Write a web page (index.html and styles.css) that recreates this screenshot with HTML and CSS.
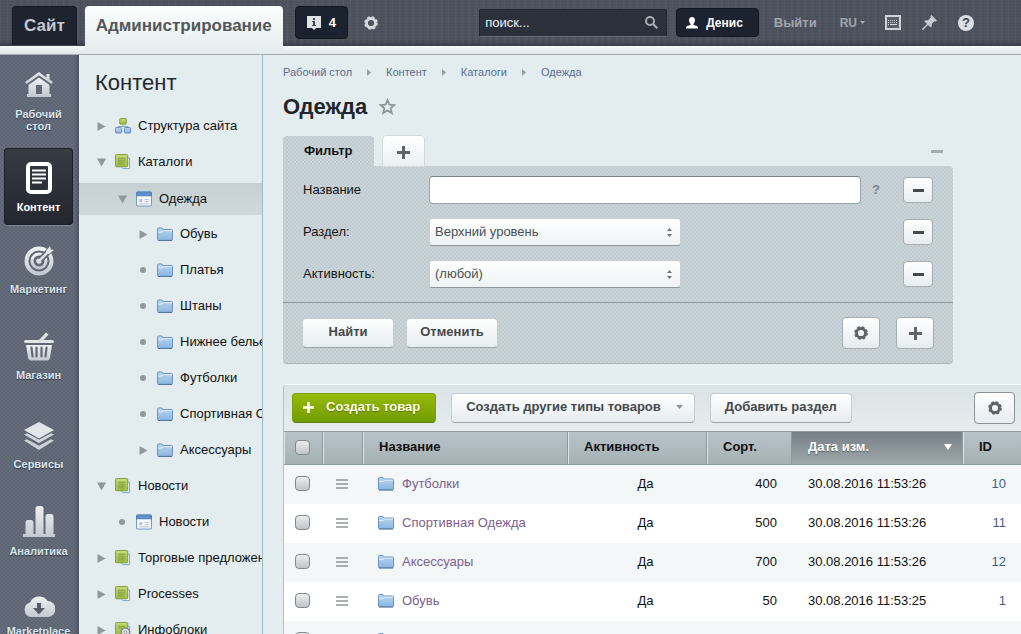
FILE: index.html
```html
<!DOCTYPE html>
<html lang="ru">
<head>
<meta charset="utf-8">
<title>Одежда</title>
<link rel="stylesheet" href="styles.css">
</head>
<body>
<svg class="sprite" aria-hidden="true">
  <defs>
    <linearGradient id="g-folder" x1="0" y1="0" x2="0" y2="1"><stop offset="0" stop-color="#b9d8f3"/><stop offset="1" stop-color="#8cb4de"/></linearGradient>
    <linearGradient id="g-green" x1="0" y1="0" x2="0" y2="1"><stop offset="0" stop-color="#c5da76"/><stop offset="1" stop-color="#9dbb45"/></linearGradient>
    <linearGradient id="g-nav" x1="0" y1="0" x2="0" y2="1"><stop offset="0" stop-color="#eef1f3"/><stop offset="1" stop-color="#c3c9d0"/></linearGradient>
  </defs>
  <symbol id="folder" viewBox="0 0 16 15">
    <path d="M.5 13V2.500q0-1 1-1h3.500l1.200 1.500h8.300q1 0 1 1v9q0 .8-1 .8h-13q-1 0-1-.8z" fill="url(#g-folder)" stroke="#6c93bd"/>
    <path d="M1 5.500h4l1.500-1.300h8.500" fill="none" stroke="#e1effa"/>
    <path d="M1 14h14" stroke="#56779f"/>
  </symbol>
  <symbol id="catalog" viewBox="0 0 17 17">
    <path d="M6.500 4.500h9v11h-7l-2-2z" fill="#e9f1f8" stroke="#7ea0c4"/>
    <path d="M.5 1.500q0-1 1-1h11q1 0 1 1v11q0 1-1 1h-11q-1 0-1-1z" fill="url(#g-green)" stroke="#7f9a3a"/>
    <path d="M3 4.500h8M3 6.500h8M3 8.500h8M3 10.500h6" stroke="#7f9a3a"/>
  </symbol>
  <symbol id="structure" viewBox="0 0 17 17">
    <path d="M8.500 6.500v3M3.500 11v-2h10v2" fill="none" stroke="#8da2b5"/>
    <rect x="5" y=".5" width="7" height="6" rx="1" fill="url(#g-green)" stroke="#7f9a3a"/>
    <rect x=".5" y="10" width="6.500" height="6" rx="1" fill="url(#g-folder)" stroke="#5f86c0"/>
    <rect x="10" y="10" width="6.500" height="6" rx="1" fill="url(#g-folder)" stroke="#5f86c0"/>
  </symbol>
  <symbol id="block" viewBox="0 0 15 14">
    <rect x=".5" y=".5" width="14" height="13" rx="1" fill="#f4f8fc" stroke="#7f9cc0"/>
    <path d="M.5 4V1.500q0-1 1-1h12q1 0 1 1V4z" fill="#5e90cf" stroke="#5480b8"/>
    <path d="M3.500 7.500h2v2h-2zM8 7.500h4M8 9.500h4M3 11.500h9" fill="#b9c2cf" stroke="#b9c2cf" stroke-width=".9"/>
  </symbol>
  <symbol id="blockset" viewBox="0 0 17 17">
    <path d="M6.500 4.500h9v11h-7l-2-2z" fill="#e9f1f8" stroke="#7ea0c4"/>
    <path d="M.5 1.500q0-1 1-1h11q1 0 1 1v11q0 1-1 1h-11q-1 0-1-1z" fill="url(#g-green)" stroke="#7f9a3a"/>
    <path d="M3 4.500h8M3 6.500h5" stroke="#7f9a3a"/>
    <circle cx="11" cy="11" r="4.500" fill="#e3e6e8" stroke="#80868c" stroke-width="1.500"/><circle cx="11" cy="11" r="1.500" fill="#fff" stroke="#80868c"/>
  </symbol>
  <symbol id="gear" viewBox="0 0 14 14">
    <circle cx="7" cy="7" r="4.500" fill="none" stroke="currentColor" stroke-width="2.800"/>
    <circle cx="7" cy="7" r="6.100" fill="none" stroke="currentColor" stroke-width="1.500" stroke-dasharray="2.800 1.990"/>
  </symbol>
  <symbol id="plus" viewBox="0 0 13 13"><path d="M6.500 0v13M0 6.500h13" stroke="currentColor" stroke-width="3"/></symbol>
  <symbol id="minus" viewBox="0 0 11 3"><path d="M0 1.500h11" stroke="currentColor" stroke-width="3"/></symbol>
  <symbol id="right" viewBox="0 0 8 9"><path d="M0 0l8 4.500L0 9z" fill="currentColor"/></symbol>
  <symbol id="down" viewBox="0 0 9 8"><path d="M0 0h9L4.500 8z" fill="currentColor"/></symbol>
  <symbol id="dot" viewBox="0 0 6 6"><circle cx="3" cy="3" r="3" fill="currentColor"/></symbol>
  <symbol id="updown" viewBox="0 0 5 9"><path d="M0 3L2.500 0 5 3zM0 6h5L2.500 9z" fill="currentColor"/></symbol>
  <symbol id="bars" viewBox="0 0 12 10"><path d="M0 1h12M0 5h12M0 9h12" stroke="currentColor" stroke-width="1.600"/></symbol>
</svg>

<header class="top">
  <a class="top-tab" href="#">Сайт</a>
  <a class="top-tab top-tab-on" href="#">Администрирование</a>
  <button class="dark-btn notices" type="button">
    <svg width="14" height="14" viewBox="0 0 14 14"><path d="M0 0h14v12H9l-2 2-2-2H0z" fill="#dfe3e6"/><path d="M6 2h2v2H6zM5 5h3v4h1v1H5V9h1V6H5z" fill="#3d4552"/></svg>
    4
  </button>
  <button class="plain-btn" type="button" aria-label="Настройки"><svg width="14" height="14"><use href="#gear"/></svg></button>
  <form class="search">
    <input type="text" value="поиск..." aria-label="Поиск">
    <button class="plain-btn" type="submit" aria-label="Найти"><svg width="13" height="13" viewBox="0 0 13 13"><circle cx="5" cy="5" r="4" fill="none" stroke="#a7adb3" stroke-width="2"/><path d="M8 8l4.300 4.300" stroke="#a7adb3" stroke-width="2.200"/></svg></button>
  </form>
  <button class="dark-btn user" type="button">
    <svg width="12" height="12" viewBox="0 0 12 12"><path d="M6 0c2 0 3 1.300 3 3.200C9 5 8 6 7.500 7v1l3.500 1q1 .5 1 2.500H0Q0 9.500 1 9l3.500-1V7C4 6 3 5 3 3.200 3 1.300 4 0 6 0z" fill="#fff"/></svg>
    Денис
  </button>
  <a class="top-link" href="#">Выйти</a>
  <button class="top-link lang" type="button">RU<svg width="5" height="3" viewBox="0 0 5 3"><path d="M0 0h5L2.500 3z" fill="#a9adb3"/></svg></button>
  <div class="top-icons">
    <button class="plain-btn" type="button" aria-label="Клавиатура"><svg width="16" height="15" viewBox="0 0 16 15"><rect x="1" y="1" width="14" height="13" fill="#596069" stroke="#ced3d7" stroke-width="2"/><path d="M3 5.500h10M3 7.500h10M3 9.500h10" stroke="#ced3d7" stroke-dasharray="1 1"/><path d="M5 9.500h6" stroke="#ced3d7"/></svg></button>
    <button class="plain-btn" type="button" aria-label="Закрепить"><svg width="15" height="15" viewBox="0 0 15 15"><path d="M9.500 0L15 5.500l-1.300 1-1.200-.3-2.800 2.800c.5 1.500 0 2.500-1 3.500L6 10 1 15l-1 0 0-1 5-5-2.700-2.700c1-1 2-1.300 3.500-.9L8.700 2.500 8.500 1z" fill="#c6cacf"/></svg></button>
    <a class="help" href="#" aria-label="Справка">?</a>
  </div>
</header>

<div class="body">
  <nav class="side">
    <a class="side-item" href="#">
      <svg width="30" height="34" viewBox="0 0 30 34"><path d="M15 4L1 14l1.600 2L15 7.300 27.400 16 29 14l-3.500-2.500V6h-3v3.400z" fill="url(#g-nav)"/><path d="M15 9.500L4.500 17v9H3v3h24v-3h-1.500v-9zM12 17h6v9h-6z" fill="url(#g-nav)" fill-rule="evenodd"/></svg>
      Рабочий стол
    </a>
    <a class="side-item side-on" href="#">
      <svg width="28" height="35" viewBox="0 0 28 35"><rect x="3" y="4" width="22" height="28" rx="3" fill="none" stroke="#fff" stroke-width="4"/><path d="M7 10.500h14M7 14.500h14M7 18.500h14M7 22.500h10" stroke="#fff" stroke-width="2"/></svg>
      Контент
    </a>
    <a class="side-item" href="#">
      <svg width="30" height="36" viewBox="0 0 30 36"><g fill="none" stroke="url(#g-nav)"><circle cx="15" cy="20" r="12.500" stroke-width="4"/><circle cx="15" cy="20" r="7" stroke-width="3"/></g><circle cx="15" cy="20" r="2.800" fill="#d9dde1"/><path d="M16 19L28 7" stroke="#626975" stroke-width="6"/><path d="M15 20L25 10" stroke="#dde1e4" stroke-width="2.500"/><path d="M22 10l4-5 .8 3.200 3.200.8-5 4h-3z" fill="#e5e8ea"/></svg>
      Маркетинг
    </a>
    <a class="side-item" href="#">
      <svg width="32" height="40" viewBox="0 0 32 40"><path d="M1 18.500q0-1.500 1.500-1.500H16l7-7.500 2.500 2L20.500 17h9q1.500 0 1.500 1.500T29.500 20h-27Q1 20 1 18.500z" fill="#e2e5e8"/><path d="M3 22h26l-2 12.500q-.5 3-3 3H8q-2.500 0-3-3z" fill="url(#g-nav)"/><path d="M8.500 24.500l1 9M13.500 24.500v9M18.500 24.500v9M23.500 24.500l-1 9" stroke="#626975" stroke-width="2.200" stroke-linecap="round"/></svg>
      Магазин
    </a>
    <a class="side-item" href="#">
      <svg width="32" height="43" viewBox="0 0 32 43"><path d="M16 13l15 8-15 8.500L1 21z" fill="#e2e6e9"/><path d="M1 25.500l3-1.300 12 6.500 12-6.500 3 1.300-15 8.500z" fill="#d2d7dc"/><path d="M1 31.500l3-1.300 12 6.500 12-6.500 3 1.300L16 41z" fill="#cbd0d6"/></svg>
      Сервисы
    </a>
    <a class="side-item" href="#">
      <svg width="32" height="41" viewBox="0 0 32 41"><path d="M0 36h2.500V24.500q0-2.500 2-2.500h4q2 0 2 2.500V36h2V11q0-3 2.500-3h3q2.500 0 2.500 3v25h2V18.500q0-2.500 2-2.500h4q2 0 2 2.500V36H32v3H0z" fill="url(#g-nav)"/></svg>
      Аналитика
    </a>
    <a class="side-item" href="#">
      <svg width="32" height="34" viewBox="0 0 32 34"><path d="M7.500 32a7.500 7.500 0 0 1-.5-14.500A10 10 0 0 1 24.500 16 8 8 0 0 1 24.500 32z" fill="url(#g-nav)"/><path d="M14 18h4v5h4l-6 6.500-6-6.500h4z" fill="#565d69"/></svg>
      Marketplace
    </a>
  </nav>

  <aside class="tree">
    <h2>Контент</h2>
    <ul>
      <li><a href="#"><svg class="mark"><use href="#right"/></svg><svg class="ico"><use href="#structure"/></svg>Структура сайта</a></li>
      <li><a href="#"><svg class="mark"><use href="#down"/></svg><svg class="ico"><use href="#catalog"/></svg>Каталоги</a></li>
      <li class="l2 current"><a href="#"><svg class="mark"><use href="#down"/></svg><svg class="ico"><use href="#block"/></svg>Одежда</a></li>
      <li class="l3"><a href="#"><svg class="mark"><use href="#right"/></svg><svg class="ico"><use href="#folder"/></svg>Обувь</a></li>
      <li class="l3"><a href="#"><svg class="mark dot"><use href="#dot"/></svg><svg class="ico"><use href="#folder"/></svg>Платья</a></li>
      <li class="l3"><a href="#"><svg class="mark dot"><use href="#dot"/></svg><svg class="ico"><use href="#folder"/></svg>Штаны</a></li>
      <li class="l3"><a href="#"><svg class="mark dot"><use href="#dot"/></svg><svg class="ico"><use href="#folder"/></svg>Нижнее белье</a></li>
      <li class="l3"><a href="#"><svg class="mark dot"><use href="#dot"/></svg><svg class="ico"><use href="#folder"/></svg>Футболки</a></li>
      <li class="l3"><a href="#"><svg class="mark dot"><use href="#dot"/></svg><svg class="ico"><use href="#folder"/></svg>Спортивная Одежда</a></li>
      <li class="l3"><a href="#"><svg class="mark"><use href="#right"/></svg><svg class="ico"><use href="#folder"/></svg>Аксессуары</a></li>
      <li><a href="#"><svg class="mark"><use href="#down"/></svg><svg class="ico"><use href="#catalog"/></svg>Новости</a></li>
      <li class="l2"><a href="#"><svg class="mark dot"><use href="#dot"/></svg><svg class="ico"><use href="#block"/></svg>Новости</a></li>
      <li><a href="#"><svg class="mark"><use href="#right"/></svg><svg class="ico"><use href="#catalog"/></svg>Торговые предложения</a></li>
      <li><a href="#"><svg class="mark"><use href="#right"/></svg><svg class="ico"><use href="#catalog"/></svg>Processes</a></li>
      <li><a href="#"><svg class="mark"><use href="#right"/></svg><svg class="ico"><use href="#blockset"/></svg>Инфоблоки</a></li>
    </ul>
  </aside>

  <main class="main">
    <nav class="crumbs">
      <a href="#">Рабочий стол</a><svg width="4" height="7" viewBox="0 0 8 9" preserveAspectRatio="none"><path d="M0 0l8 4.500L0 9z" fill="#95a0a8"/></svg>
      <a href="#">Контент</a><svg width="4" height="7" viewBox="0 0 8 9" preserveAspectRatio="none"><path d="M0 0l8 4.500L0 9z" fill="#95a0a8"/></svg>
      <a href="#">Каталоги</a><svg width="4" height="7" viewBox="0 0 8 9" preserveAspectRatio="none"><path d="M0 0l8 4.500L0 9z" fill="#95a0a8"/></svg>
      <a href="#">Одежда</a>
    </nav>
    <div class="title">
      <h1>Одежда</h1>
      <button class="plain-btn" type="button" aria-label="В избранное"><svg width="17" height="17" viewBox="0 0 17 17"><path d="M8.500 2l1.900 4.600 5 .4-3.800 3.200 1.200 4.800-4.300-2.600L4.200 15l1.200-4.800L1.600 7l5-.4z" fill="#eaf0f1" stroke="#8d989d" stroke-width="1.800"/></svg></button>
    </div>

    <section class="filter">
      <div class="filter-tabs">
        <button class="tab tab-on" type="button">Фильтр</button>
        <button class="tab tab-add" type="button" aria-label="Добавить фильтр"><svg width="13" height="13"><use href="#plus"/></svg></button>
        <button class="plain-btn collapse" type="button" aria-label="Свернуть"><svg width="12" height="3" viewBox="0 0 12 3"><path d="M0 1.500h12" stroke="#a3adb1" stroke-width="3"/></svg></button>
      </div>
      <form class="filter-box">
        <div class="fields">
          <div class="field">
            <label for="f-name">Название</label>
            <input id="f-name" class="text" type="text">
            <span class="hint">?</span>
            <button class="btn btn-mini" type="button" aria-label="Убрать"><svg width="11" height="3"><use href="#minus"/></svg></button>
          </div>
          <div class="field">
            <label for="f-section">Раздел:</label>
            <span class="select"><select id="f-section"><option>Верхний уровень</option></select><svg width="5" height="9"><use href="#updown"/></svg></span>
            <button class="btn btn-mini" type="button" aria-label="Убрать"><svg width="11" height="3"><use href="#minus"/></svg></button>
          </div>
          <div class="field">
            <label for="f-active">Активность:</label>
            <span class="select"><select id="f-active"><option>(любой)</option></select><svg width="5" height="9"><use href="#updown"/></svg></span>
            <button class="btn btn-mini" type="button" aria-label="Убрать"><svg width="11" height="3"><use href="#minus"/></svg></button>
          </div>
        </div>
        <div class="filter-foot">
          <button class="btn" type="submit">Найти</button>
          <button class="btn" type="reset">Отменить</button>
          <span class="spacer"></span>
          <button class="btn btn-icon" type="button" aria-label="Настройки фильтра"><svg width="14" height="14"><use href="#gear"/></svg></button>
          <button class="btn btn-icon" type="button" aria-label="Добавить условие"><svg width="13" height="13"><use href="#plus"/></svg></button>
        </div>
      </form>
    </section>

    <section class="list">
      <div class="toolbar">
        <button class="btn btn-green" type="button"><svg width="11" height="11"><use href="#plus"/></svg>Создать товар</button>
        <button class="btn" type="button">Создать другие типы товаров<svg width="7" height="4" viewBox="0 0 7 4"><path d="M0 0h7L3.500 4z" fill="#8d9499"/></svg></button>
        <button class="btn" type="button">Добавить раздел</button>
        <span class="spacer"></span>
        <button class="btn btn-icon btn-gear" type="button" aria-label="Настройки списка"><svg width="14" height="14"><use href="#gear"/></svg></button>
      </div>
      <table>
        <colgroup><col class="c-check"><col class="c-menu"><col><col class="c-active"><col class="c-sort"><col class="c-date"><col class="c-id"></colgroup>
        <thead>
          <tr><th><input type="checkbox" aria-label="Выбрать все"></th><th></th><th>Название</th><th>Активность</th><th>Сорт.</th><th class="sorted"><span>Дата изм.<svg width="8" height="6" viewBox="0 0 8 6"><path d="M0 0h8L4 6z" fill="#fff"/></svg></span></th><th>ID</th></tr>
        </thead>
        <tbody>
          <tr><td><input type="checkbox" aria-label="Футболки"></td><td><svg class="bars"><use href="#bars"/></svg></td><td><a class="name" href="#"><svg width="16" height="15"><use href="#folder"/></svg>Футболки</a></td><td class="mid">Да</td><td class="num">400</td><td>30.08.2016 11:53:26</td><td class="num"><a href="#">10</a></td></tr>
          <tr><td><input type="checkbox" aria-label="Спортивная Одежда"></td><td><svg class="bars"><use href="#bars"/></svg></td><td><a class="name" href="#"><svg width="16" height="15"><use href="#folder"/></svg>Спортивная Одежда</a></td><td class="mid">Да</td><td class="num">500</td><td>30.08.2016 11:53:26</td><td class="num"><a href="#">11</a></td></tr>
          <tr><td><input type="checkbox" aria-label="Аксессуары"></td><td><svg class="bars"><use href="#bars"/></svg></td><td><a class="name" href="#"><svg width="16" height="15"><use href="#folder"/></svg>Аксессуары</a></td><td class="mid">Да</td><td class="num">700</td><td>30.08.2016 11:53:26</td><td class="num"><a href="#">12</a></td></tr>
          <tr><td><input type="checkbox" aria-label="Обувь"></td><td><svg class="bars"><use href="#bars"/></svg></td><td><a class="name" href="#"><svg width="16" height="15"><use href="#folder"/></svg>Обувь</a></td><td class="mid">Да</td><td class="num">50</td><td>30.08.2016 11:53:25</td><td class="num"><a href="#">1</a></td></tr>
          <tr><td><input type="checkbox" aria-label="Строка"></td><td></td><td><a class="name" href="#" aria-label="Папка"><svg width="16" height="15"><use href="#folder"/></svg></a></td><td></td><td></td><td></td><td></td></tr>
        </tbody>
      </table>
    </section>
  </main>
</div>
</body>
</html>
```

FILE: styles.css
```css
* { box-sizing: border-box; }
body {
  margin: 0;
  height: 100vh;
  overflow: hidden;
  display: flex;
  flex-direction: column;
  background: #e3ecee;
  color: #111;
  font: 13px/16px "Liberation Sans", Arial, sans-serif;
}
.sprite { position: absolute; width: 0; height: 0; }
svg { flex: none; display: block; }
a { color: inherit; text-decoration: none; }
button, input, select { font: inherit; color: inherit; margin: 0; }
button { cursor: pointer; }
h1, h2, ul { margin: 0; padding: 0; }
.spacer { flex: 1; }
.plain-btn { display: flex; padding: 0; border: 0; background: none; color: #d5d9dc; }

/* top bar */
.top {
  flex: none;
  display: flex;
  align-items: center;
  height: 55px;
  padding: 0 47px 9px 12px;
  border-bottom: 1px solid #a3afb5;
  background:
    linear-gradient(#f4f8f9, #dfe8eb) 0 100% / 100% 8px no-repeat,
    linear-gradient(rgba(0, 0, 0, 0) 40px, rgba(20, 25, 33, .35) 46px),
    repeating-linear-gradient(90deg, rgba(255, 255, 255, .03) 0 1px, transparent 1px 3px, rgba(0, 0, 0, .04) 3px 4px, transparent 4px 7px),
    repeating-linear-gradient(rgba(255, 255, 255, .02) 0 1px, transparent 1px 3px),
    #4c525c;
}
.top-tab {
  align-self: flex-end;
  height: 39px;
  padding: 0 11px;
  border: 1px solid #131822;
  border-bottom: 0;
  border-radius: 4px 4px 0 0;
  background: #1d2430;
  color: #c5cad0;
  font-size: 17px;
  font-weight: bold;
  line-height: 38px;
}
.top-tab-on {
  height: 47px;
  margin: 0 0 -8px 8px;
  border: 0;
  background: linear-gradient(#fcfdfd, #e4ecee);
  color: #53575b;
  line-height: 40px;
}
.dark-btn {
  display: flex;
  align-items: center;
  border: 1px solid #121722;
  border-radius: 4px;
  background: #1b2330;
  color: #fff;
  font-weight: bold;
}
.notices { height: 33px; margin: 0 16px 0 12px; padding: 0 11px; gap: 8px; }
.search {
  display: flex;
  align-items: center;
  width: 188px;
  height: 28px;
  margin-left: auto;
  padding-right: 8px;
  border: 1px solid #20252e;
  border-bottom-color: #69707a;
  border-radius: 2px;
  background: #2b313b;
}
.search input {
  flex: 1;
  min-width: 0;
  padding: 0 5px;
  border: 0;
  background: none;
  color: #f1f3f4;
  outline: 0;
}
.user { height: 29px; margin-left: 9px; padding: 0 15px 0 9px; gap: 8px; font-size: 12px; }
.top-link {
  display: flex;
  align-items: center;
  gap: 3px;
  margin-left: 15px;
  padding: 0;
  border: 0;
  background: none;
  color: #a0a5ac;
  font-weight: bold;
}
.lang { margin-left: 23px; font-size: 12px; }
.top-icons { display: flex; align-items: center; gap: 21px; margin-left: 20px; }
.help {
  width: 16px;
  height: 16px;
  border-radius: 8px;
  background: #dcdfe2;
  color: #3d434c;
  font-weight: bold;
  text-align: center;
}

.body { flex: 1; min-height: 0; display: flex; }

/* section rail */
.side {
  flex: none;
  width: 79px;
  overflow: hidden;
  display: flex;
  flex-direction: column;
  gap: 4px;
  padding: 1px 6px 0 4px;
  background:
    linear-gradient(90deg, transparent 74px, rgba(40, 45, 60, .35)),
    radial-gradient(circle, rgba(30, 36, 48, .12) 1px, transparent 1px) 0 0 / 4px 4px,
    radial-gradient(circle, rgba(30, 36, 48, .12) 1px, transparent 1px) 2px 2px / 4px 4px,
    #656c7b;
}
.side-item {
  flex: none;
  display: flex;
  flex-direction: column;
  align-items: center;
  gap: 6px;
  padding: 12px 8px;
  border-radius: 4px;
  color: #d9e4ec;
  font-size: 11px;
  font-weight: bold;
  line-height: 12px;
  text-align: center;
  text-shadow: 0 1px 1px #333a47;
}
.side-on {
  background: linear-gradient(#363b44, #23272f);
  box-shadow: inset 0 0 0 1px #1c2028, 0 1px 0 #858c99;
  color: #fff;
}

/* section tree */
.tree {
  flex: none;
  width: 184px;
  overflow: hidden;
  border-right: 1px solid #a5b9c4;
}
.tree h2 {
  padding: 15px 16px 13px;
  color: #24292e;
  font-size: 22px;
  font-weight: normal;
  line-height: 25px;
}
.tree ul { list-style: none; white-space: nowrap; }
.tree li { padding: 2px 0; }
.tree li a { display: flex; align-items: center; height: 32px; padding-left: 18px; }
.tree .l2 a { padding-left: 39px; }
.tree .l3 a { padding-left: 60px; }
.tree .current { padding: 3px 0 1px; }
.tree .current a { background: linear-gradient(#c6d0d3, #cfd8db); }
.mark { width: 9px; height: 9px; color: #8f999d; }
.mark.dot { width: 8px; height: 6px; }
.mark.dot + .ico { margin-left: 10px; }
.ico { width: 16px; height: 16px; margin: 0 7px 0 9px; }

/* page */
.main { flex: 1; min-width: 0; padding: 9px 0 0 20px; }
.crumbs { display: flex; align-items: center; gap: 15px; color: #5a6c94; font-size: 11px; }
.title { display: flex; align-items: center; gap: 12px; margin: 12px 0 15px; }
h1 { color: #20262a; font-size: 22px; line-height: 29px; }

.filter { margin-right: 68px; }
.filter-tabs { display: flex; align-items: flex-end; }
.tab {
  height: 30px;
  padding: 0 21px;
  border: 0;
  border-radius: 4px 4px 0 0;
  font-weight: bold;
}
.tab-on, .filter-box {
  background:
    radial-gradient(circle, rgba(150, 166, 174, .2) 1px, transparent 1px) 0 0 / 4px 4px,
    radial-gradient(circle, rgba(150, 166, 174, .2) 1px, transparent 1px) 2px 2px / 4px 4px,
    #cbd5d9;
}
.tab-add {
  margin-left: 9px;
  padding: 3px 14px 0;
  background: linear-gradient(#fff, #eaf0f2);
  box-shadow: 0 0 0 1px #d2dcdf;
  color: #5d6367;
}
.collapse { margin: 0 10px 13px auto; }
.filter-box { border-radius: 0 4px 4px 4px; box-shadow: inset 0 -1px 0 #a9b5bb; }
.fields { display: grid; gap: 14px; padding: 10px 20px 14px; }
.field { display: flex; align-items: center; height: 28px; }
.field label { flex: none; width: 126px; }
.text {
  flex: 1;
  min-width: 0;
  height: 28px;
  padding: 0 6px;
  border: 1px solid #98a4aa;
  border-top-color: #78848b;
  border-radius: 4px;
  background: #fff;
}
.hint { width: 42px; padding-left: 11px; color: #78858e; font-weight: bold; }
.select { display: grid; grid-template-columns: 1fr 14px; align-items: center; width: 252px; }
.select select {
  grid-area: 1 / 1 / 2 / 3;
  width: 100%;
  height: 28px;
  padding: 0 20px 0 5px;
  appearance: none;
  border: 1px solid #c5ced2;
  border-bottom-color: #8c989e;
  border-radius: 3px;
  background: linear-gradient(#fff, #edf2f4);
  color: #4b5156;
}
.select svg { grid-area: 1 / 2; color: #6d757a; }
.select + .btn { margin-left: auto; }

.btn {
  display: flex;
  align-items: center;
  justify-content: center;
  height: 30px;
  min-width: 92px;
  padding: 0 13px 2px;
  border: 1px solid #c3ccd0;
  border-bottom-color: #98a4a9;
  border-radius: 4px;
  background: linear-gradient(#fff, #e6ecef);
  color: #44494d;
  font-weight: bold;
  white-space: nowrap;
}
.btn-mini { width: 30px; min-width: 30px; height: 26px; padding: 0; border-color: #a3aeb4; }
.btn-icon { width: 38px; min-width: 38px; height: 32px; padding: 0; border-color: #a3aeb4; color: #5d6367; }
.filter-foot {
  display: flex;
  align-items: center;
  gap: 12px;
  padding: 14px 19px 15px;
  border-top: 1px solid #8996a0;
}
.filter-foot .btn-icon + .btn-icon { margin-left: 4px; }

.list { margin-top: 20px; border-left: 1px solid #b3c1c7; border-top: 1px solid #f8fbfb; border-radius: 4px 0 0 0; }
.toolbar {
  display: flex;
  align-items: center;
  gap: 15px;
  padding: 7px 6px 7px 8px;
  background: linear-gradient(#d9e2e4, #e6edef);
}
.toolbar .btn { padding: 0 14px 2px; }
.toolbar .btn svg { margin: 0 -3px 0 15px; }
.toolbar .btn-icon { padding: 0; }
.toolbar .btn-gear svg { margin: 0; }
.toolbar .btn-gear { width: 41px; border-color: #86939a; }
.toolbar .btn-green {
  padding-right: 15px;
  border-color: #7fa000 #7fa000 #5f7c00;
  background: linear-gradient(#96ba06, #729b00);
  color: #fdfde4;
  text-shadow: 0 1px 1px #5b7600;
}
.toolbar .btn-green svg { margin: 0 12px 0 -4px; color: #fff; }

table { width: 100%; table-layout: fixed; border-collapse: separate; border-spacing: 0; }
.c-check { width: 39px; }
.c-menu { width: 40px; }
.c-active { width: 139px; }
.c-sort { width: 85px; }
.c-date { width: 171px; }
.c-id { width: 58px; }
th {
  height: 34px;
  padding: 0 16px 2px;
  border-top: 1px solid #8f9da3;
  border-bottom: 1px solid #8f9da3;
  border-right: 1px solid #8c999e;
  box-shadow: inset 1px 0 0 #dde5e8;
  background: linear-gradient(#b7c3c8, #a6b1b6);
  text-align: left;
}
th:last-child { border-right: 0; }
th:first-child, td:first-child { padding-left: 11px; padding-right: 11px; }
.sorted { background: linear-gradient(#757f85, #9ea8ad); box-shadow: none; color: #fff; text-shadow: 0 1px 1px #5a646a; }
.sorted span { display: flex; align-items: center; justify-content: space-between; margin-right: -6px; }
td { height: 39px; padding: 0 16px 2px; background: #f3f7f8; }
tr:nth-child(even) td { background: #fff; }
td:nth-child(2) { padding-left: 13px; padding-right: 13px; }
.mid { text-align: center; padding-right: 0; }
.num { text-align: right; padding-right: 15px; }
.num a { color: #3f5f8c; }
td:nth-child(3) { padding-left: 15px; }
.name { display: flex; align-items: center; gap: 8px; color: #7c6090; }
.bars { width: 12px; height: 10px; color: #8f979b; }
table input {
  display: block;
  width: 15px;
  height: 15px;
  appearance: none;
  border: 1px solid #7f888d;
  border-radius: 4px;
  background: linear-gradient(#eceeee, #bfc4c6);
}
```
